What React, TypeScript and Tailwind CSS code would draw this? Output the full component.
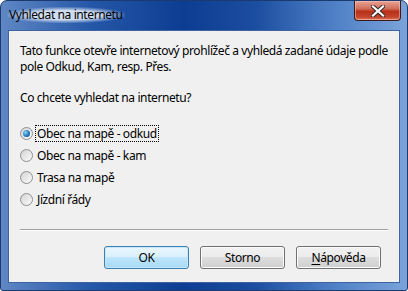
import React from "react";

const options = ["Obec na mapě - odkud", "Obec na mapě - kam", "Trasa na mapě", "Jízdní řády"];

const Radio = ({ checked }: { checked?: boolean }) => (
  <span className="w-[13px] h-[13px] rounded-full border border-[#8e8f8f] bg-gradient-to-br from-[#d4d4d4] to-[#fbfbfb] flex items-center justify-center shrink-0">
    {checked && (
      <span className="w-[7px] h-[7px] rounded-full bg-[radial-gradient(circle_at_35%_35%,#8ad2f4,#1a74b6_60%,#0c4f86)]" />
    )}
  </span>
);

const Button = ({ children, primary }: { children: React.ReactNode; primary?: boolean }) => (
  <button
    className={
      "w-[85px] h-[23px] rounded-[3px] border text-[12px] text-black flex items-center justify-center " +
      (primary
        ? "border-[#3c7fb1] bg-[linear-gradient(to_bottom,#eaf6fd_0%,#d9f0fc_50%,#bee6fd_50%,#a7d9f5_100%)] shadow-[inset_0_0_0_1px_#c8e8fa]"
        : "border-[#707070] bg-[linear-gradient(to_bottom,#f2f2f2_0%,#ebebeb_50%,#dddddd_50%,#cfcfcf_100%)] shadow-[inset_0_0_0_1px_#fcfcfc]")
    }
  >
    {children}
  </button>
);

export default function App() {
  return (
    <div
      className="w-[408px] h-[291px] flex flex-col rounded-t-[7px] rounded-b-[3px] border border-[#1c3a6e] bg-[linear-gradient(to_right,#5f87c4_0%,#2557a8_22%,#0d3d92_45%,#1a4c9f_62%,#4f80c6_82%,#7aa3d9_100%)] overflow-hidden tracking-[-0.4px]"
      style={{ fontFamily: '"Segoe UI", "Noto Sans", sans-serif' }}
    >
      <div className="h-[29px] flex items-start justify-between relative">
        <div className="mt-[6px] ml-[6px] px-[2px] text-[12px] leading-[16px] text-black rounded-full bg-[radial-gradient(ellipse_at_center,rgba(235,242,250,0.85)_40%,rgba(235,242,250,0)_75%)]">
          Vyhledat na internetu
        </div>
        <div className="mr-[6px] w-[47px] h-[20px] rounded-b-[4px] border border-t-0 border-[#3b1c1a] bg-[linear-gradient(to_bottom,#e8a193_0%,#d0705c_40%,#b93119_55%,#c4452e_85%,#de8066_100%)] flex items-center justify-center shadow-[inset_0_0_0_1px_rgba(255,200,190,0.5)]">
          <svg width="14" height="12" viewBox="0 0 14 12">
            <path d="M2 1.5 L12 10.5 M12 1.5 L2 10.5" stroke="#3a2a2a" strokeWidth="4.2" strokeLinecap="square" />
            <path d="M2 1.5 L12 10.5 M12 1.5 L2 10.5" stroke="#ffffff" strokeWidth="2.2" strokeLinecap="square" />
          </svg>
        </div>
      </div>
      <div className="flex-1 mx-[7px] mb-[7px] border border-[#3f63a0] bg-[#f0f0f0] flex flex-col text-[12px] leading-[16px] text-black">
        <div className="pl-[11px] pt-[12px] whitespace-nowrap">
          <p>Tato funkce otevře internetový prohlížeč a vyhledá zadané údaje podle</p>
          <p>pole Odkud, Kam, resp. Přes.</p>
          <p className="mt-[15px]">Co chcete vyhledat na internetu?</p>
        </div>
        <div className="pl-[11px] mt-[19px] flex flex-col gap-[6px]">
          {options.map((o, i) => (
            <div key={o} className="flex items-center h-[16px]">
              <Radio checked={i === 0} />
              <span
                className={
                  "ml-[3px] px-[1px] leading-[15px] " + (i === 0 ? "outline outline-1 outline-dotted outline-black" : "")
                }
              >
                {o}
              </span>
            </div>
          ))}
        </div>
        <div className="mx-[11px] mt-[22px] h-[1px] bg-[#a0a0a0] border-b border-white box-content" />
        <div className="flex justify-end gap-[11px] pr-[18px] mt-[15px]">
          <Button primary>OK</Button>
          <Button>Storno</Button>
          <Button>
            <span>
              <span className="underline underline-offset-2">N</span>ápověda
            </span>
          </Button>
        </div>
      </div>
    </div>
  );
}
